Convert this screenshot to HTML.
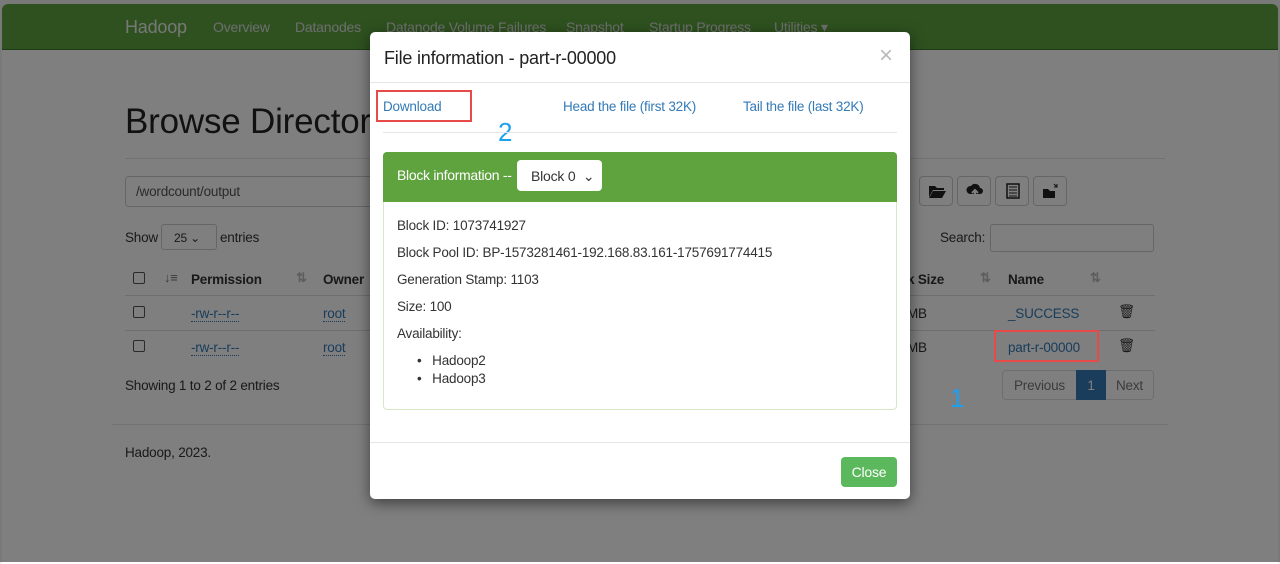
<!DOCTYPE html>
<html><head><meta charset="utf-8"><style>
*{box-sizing:border-box;margin:0;padding:0}
body{width:1280px;height:562px;background:#f2f2f2;font-family:"Liberation Sans",sans-serif;font-size:13.5px;color:#333;position:relative;overflow:hidden;letter-spacing:-0.2px}
.page{position:absolute;left:2px;top:4px;width:1276px;height:560px;background:#fff;border-radius:6px 6px 0 0;overflow:hidden}
.a{position:absolute;white-space:nowrap}
.nav{position:absolute;left:0;top:0;width:1276px;height:46px;background:#5ca33f;border-bottom:1px solid #3d7a28}
.nav span{position:absolute;top:15px;color:#ddd;font-size:14px}
.link{color:#337ab7}
.btn{position:absolute;top:172px;width:34px;height:30px;border:1px solid #ccc;border-radius:4px;background:#fff}
.btn svg{position:absolute;left:8px;top:6px}
.ov{position:absolute;left:0;top:0;width:1280px;height:562px;background:rgba(0,0,0,.5)}
.modal{position:absolute;left:370px;top:32px;width:540px;height:467px;background:#fff;border-radius:5px;box-shadow:0 4px 14px rgba(0,0,0,.5)}
.dot{border-bottom:1px dotted #337ab7}
.s{color:#bbb;font-size:13px;font-weight:bold}
</style></head><body>
<div class="page">
<div class="nav">
<span style="left:123px;top:13px;font-size:18px;color:#eee">Hadoop</span>
<span style="left:211px">Overview</span><span style="left:293px">Datanodes</span><span style="left:384px">Datanode Volume Failures</span><span style="left:564px">Snapshot</span><span style="left:647px">Startup Progress</span><span style="left:772px">Utilities ▾</span>
</div>
<div class="a" style="left:123px;top:98px;font-size:35px;color:#222">Browse Directory</div>
<div class="a" style="left:123px;top:154px;width:1040px;border-top:1px solid #e5e5e5"></div>
<div class="a" style="left:123px;top:172px;width:300px;height:31px;border:1px solid #ccc;border-radius:4px;padding:7px 10px;color:#555">/wordcount/output</div>
<div class="btn" style="left:917px"><svg width="18" height="16"><path d="M1 3h6l2 2h7v2H5L1 14z M5 8h13l-4 7H1z" fill="#222"/></svg></div>
<div class="btn" style="left:955px"><svg width="18" height="16"><path d="M4 11a4 4 0 0 1 1-8 5 5 0 0 1 9 2 3 3 0 0 1 0 6z" fill="#222"/><path d="M9 15V8M6 10l3-3 3 3" stroke="#fff" stroke-width="2" fill="none"/></svg></div>
<div class="btn" style="left:993px"><svg width="18" height="16"><rect x="3" y="1" width="12" height="14" fill="none" stroke="#222" stroke-width="1.5"/><path d="M5 4h8M5 7h8M5 10h8M5 13h8" stroke="#222"/></svg></div>
<div class="btn" style="left:1031px"><svg width="18" height="16"><path d="M1 6h5l2 2h5v7H1z" fill="#222"/><path d="M12 1l3 3M15 1v3h-3" stroke="#222" fill="none"/></svg></div>
<div class="a" style="left:123px;top:226px">Show</div>
<div class="a" style="left:159px;top:220px;width:56px;height:26px;border:1px solid #ccc;border-radius:3px;padding:6px 12px;font-size:12px">25 ⌄</div>
<div class="a" style="left:218px;top:226px">entries</div>
<div class="a" style="left:938px;top:226px">Search:</div>
<div class="a" style="left:988px;top:220px;width:164px;height:28px;border:1px solid #ccc;border-radius:3px"></div>
<div class="a" style="left:131px;top:268px;width:12px;height:12px;border:1px solid #555;border-radius:2px"></div>
<div class="a s" style="left:162px;top:266px;color:#777">↓≡</div>
<div class="a" style="left:189px;top:268px;font-weight:bold">Permission</div>
<div class="a s" style="left:294px;top:266px">⇅</div>
<div class="a" style="left:321px;top:268px;font-weight:bold">Owner</div>
<div class="a" style="left:905px;top:268px;font-weight:bold">k Size</div>
<div class="a s" style="left:978px;top:266px">⇅</div>
<div class="a" style="left:1006px;top:268px;font-weight:bold">Name</div>
<div class="a s" style="left:1088px;top:266px">⇅</div>
<div class="a" style="left:123px;top:291px;width:1030px;border-top:1px solid #ddd"></div>
<div class="a" style="left:123px;top:326px;width:1030px;border-top:1px solid #ddd"></div>
<div class="a" style="left:131px;top:302px;width:12px;height:12px;border:1px solid #555;border-radius:2px"></div>
<div class="a" style="left:131px;top:336px;width:12px;height:12px;border:1px solid #555;border-radius:2px"></div>
<div class="a link dot" style="left:189px;top:302px">-rw-r--r--</div><div class="a link dot" style="left:321px;top:302px">root</div>
<div class="a link dot" style="left:189px;top:336px">-rw-r--r--</div><div class="a link dot" style="left:321px;top:336px">root</div>
<div class="a" style="left:905px;top:302px">MB</div><div class="a" style="left:905px;top:336px">MB</div>
<div class="a link" style="left:1006px;top:302px">_SUCCESS</div><div class="a link" style="left:1006px;top:336px">part-r-00000</div>
<div class="a" style="left:1116px;top:300px">🗑</div><div class="a" style="left:1116px;top:334px">🗑</div>
<div class="a" style="left:123px;top:374px">Showing 1 to 2 of 2 entries</div>
<div class="a" style="left:1000px;top:366px;width:152px;height:30px;border:1px solid #ddd;border-radius:4px"></div>
<div class="a" style="left:1012px;top:374px;color:#777">Previous</div>
<div class="a" style="left:1074px;top:366px;width:30px;height:30px;background:#337ab7;color:#fff;text-align:center;padding-top:8px">1</div>
<div class="a" style="left:1114px;top:374px;color:#777">Next</div>
<div class="a" style="left:110px;top:420px;width:1056px;border-top:1px solid #e5e5e5"></div>
<div class="a" style="left:123px;top:441px">Hadoop, 2023.</div>
</div>
<div class="ov"></div>
<div class="a" style="left:994px;top:330px;width:105px;height:32px;border:2px solid #e84a4a"></div>
<div class="a" style="left:950px;top:383px;font-size:26px;color:#1ea0f0">1</div>
<div class="modal">
<div class="a" style="left:14px;top:16px;font-size:18px;color:#222">File information - part-r-00000</div>
<div class="a" style="left:509px;top:10px;font-size:24px;color:#bbb">×</div>
<div class="a" style="left:0;top:50px;width:540px;border-top:1px solid #e5e5e5"></div>
<div class="a link" style="left:13px;top:67px">Download</div>
<div class="a link" style="left:193px;top:67px">Head the file (first 32K)</div>
<div class="a link" style="left:373px;top:67px">Tail the file (last 32K)</div>
<div class="a" style="left:6px;top:58px;width:96px;height:32px;border:2px solid #e84a4a"></div>
<div class="a" style="left:128px;top:85px;font-size:26px;color:#1ea0f0">2</div>
<div class="a" style="left:13px;top:100px;width:514px;border-top:1px solid #e5e5e5"></div>
<div class="a" style="left:13px;top:120px;width:514px;height:258px;border:1px solid #d6e9c6;border-radius:4px"></div>
<div class="a" style="left:13px;top:120px;width:514px;height:50px;background:#5fa33f;border-radius:4px 4px 0 0"></div>
<div class="a" style="left:27px;top:135px;color:#fff;font-size:14px;letter-spacing:-0.3px">Block information --</div>
<div class="a" style="left:147px;top:128px;width:85px;height:31px;background:#fff;border-radius:4px;padding:8px 14px;font-size:14px">Block 0 &nbsp;⌄</div>
<div class="a" style="left:27px;top:186px">Block ID: 1073741927</div>
<div class="a" style="left:27px;top:213px">Block Pool ID: BP-1573281461-192.168.83.161-1757691774415</div>
<div class="a" style="left:27px;top:240px">Generation Stamp: 1103</div>
<div class="a" style="left:27px;top:267px">Size: 100</div>
<div class="a" style="left:27px;top:294px">Availability:</div>
<div class="a" style="left:47px;top:321px">•&nbsp;&nbsp; Hadoop2</div>
<div class="a" style="left:47px;top:339px">•&nbsp;&nbsp; Hadoop3</div>
<div class="a" style="left:0;top:410px;width:540px;border-top:1px solid #e5e5e5"></div>
<div class="a" style="left:471px;top:425px;width:56px;height:30px;background:#5cb85c;border-radius:4px;color:#fff;font-size:14px;text-align:center;padding-top:7px">Close</div>
</div>
</body></html>
